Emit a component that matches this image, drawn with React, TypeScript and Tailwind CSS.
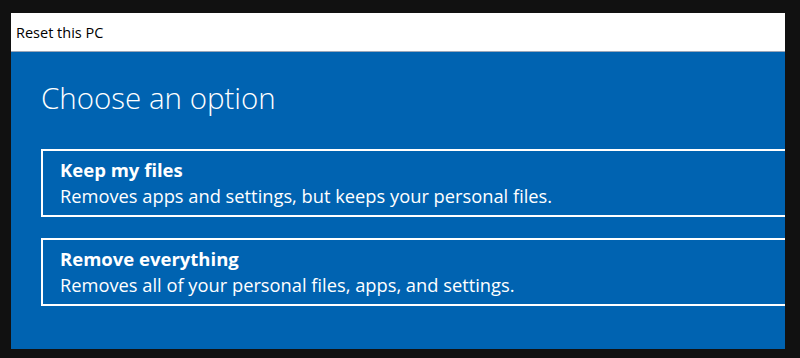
import React from 'react';

const options = [
  { title: 'Keep my files', desc: 'Removes apps and settings, but keeps your personal files.' },
  { title: 'Remove everything', desc: 'Removes all of your personal files, apps, and settings.' },
];

export default function App() {
  return (
    <div
      className="w-[800px] h-[358px] bg-[#111111] pt-[13px] pl-[11px] pr-[15px] pb-[9px] overflow-hidden"
      style={{ fontFamily: '"Open Sans", "Noto Sans", sans-serif' }}
    >
      <div className="flex flex-col h-full">
        {/* title bar */}
        <div className="h-[39px] shrink-0 bg-white border-b border-[#9aa6b8] flex items-center pl-[5px] pt-[2px]">
          <span className="text-[14.5px] text-black">Reset this PC</span>
        </div>

        {/* body */}
        <div className="flex-1 bg-[#0063b1] overflow-hidden pl-[30px] pt-[28px]">
          <h1 className="text-[29.5px] leading-[36px] font-light text-white">Choose an option</h1>

          <div className="mt-[33px] flex flex-col gap-[21px]">
            {options.map((o) => (
              <div
                key={o.title}
                className="h-[68px] border-2 border-r-0 border-white pl-[17px] pt-[5px]"
              >
                <div className="text-[18.5px] leading-[27px] font-bold text-white">{o.title}</div>
                <div className="text-[18.3px] leading-[26px] text-white">{o.desc}</div>
              </div>
            ))}
          </div>
        </div>
      </div>
    </div>
  );
}
